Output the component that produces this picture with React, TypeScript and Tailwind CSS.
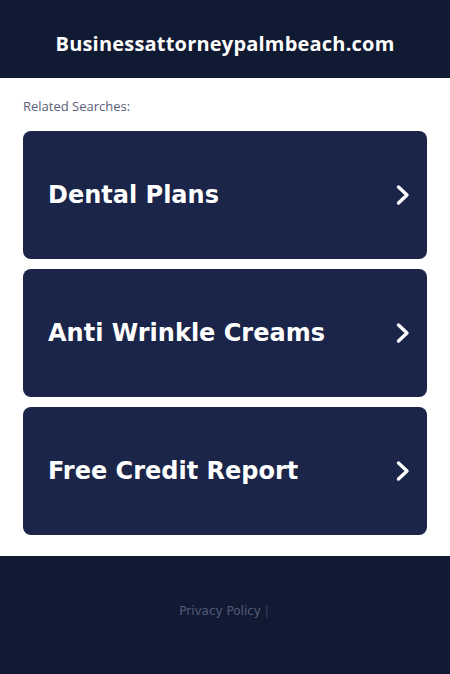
export default function App() {
  const items = ["Dental Plans", "Anti Wrinkle Creams", "Free Credit Report"];
  return (
    <div className="w-[450px] min-h-[674px] flex flex-col bg-white">
      <div className="h-[78px] bg-[#111a33] flex items-center justify-center pt-[10px]">
        <h1 className="text-white text-[20px] font-bold tracking-[0.2px]" style={{ fontFamily: '"Open Sans", sans-serif' }}>
          Businessattorneypalmbeach.com
        </h1>
      </div>
      <div className="px-[23px] pt-[20px] pb-[21px] flex flex-col">
        <div className="text-[13px] text-[#5a6079] mb-[16px] leading-[17px]" style={{ fontFamily: '"Open Sans", sans-serif' }}>
          Related Searches:
        </div>
        <div className="flex flex-col gap-[10px]">
          {items.map((t) => (
            <div key={t} className="h-[128px] rounded-[8px] bg-[#1a2549] flex items-center justify-between pl-[25px] pr-[16px]">
              <span className="text-white font-bold text-[24px]" style={{ fontFamily: '"DejaVu Sans", sans-serif' }}>{t}</span>
              <svg width="16" height="22" viewBox="0 0 16 22" fill="none">
                <path d="M3.5 3 L12 11 L3.5 19" stroke="white" strokeWidth="3.4" strokeLinecap="round" strokeLinejoin="round" />
              </svg>
            </div>
          ))}
        </div>
      </div>
      <div className="flex-1 bg-[#111a33] flex justify-center pt-[46px] pb-[50px]">
        <div className="text-[12px] text-[#545a77] pr-[2px]" style={{ fontFamily: '"DejaVu Sans", sans-serif' }}>
          Privacy Policy <span className="text-[#3c4360]">|</span>
        </div>
      </div>
    </div>
  );
}
